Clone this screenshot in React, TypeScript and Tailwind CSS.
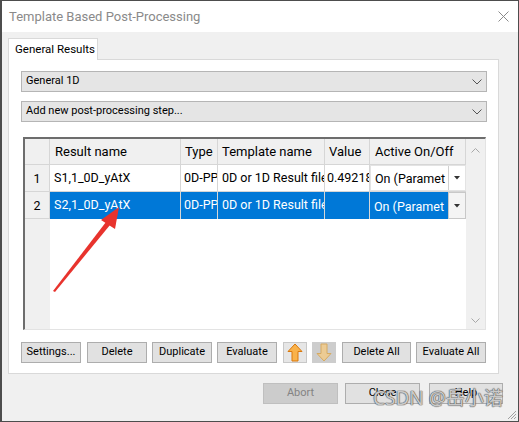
import React from "react";

const Chevron = () => (
  <svg width="10" height="6" viewBox="0 0 10 6" className="shrink-0">
    <path d="M0.5 0.5 L5 5 L9.5 0.5" fill="none" stroke="#555" strokeWidth="1" />
  </svg>
);

const Btn = ({ children, className = "" }: { children?: React.ReactNode; className?: string }) => (
  <div
    className={
      "h-[21px] flex items-center justify-center bg-[#e1e1e1] border border-[#adadad] text-[11px] text-black shrink-0 whitespace-nowrap " +
      className
    }
  >
    {children}
  </div>
);

const Drop = ({ label }: { label: string }) => (
  <div className="h-[21px] flex items-center justify-between bg-[#e5e5e5] border border-[#b5b5b5] pl-[4px] pr-[4px] text-[11px] text-black">
    <span>{label}</span>
    <Chevron />
  </div>
);

const ArrowUp = ({ fill, stroke }: { fill: string; stroke: string }) => (
  <svg width="16" height="19" viewBox="0 0 16 19">
    <polygon points="8,1 15,8.5 11,8.5 11,18 5,18 5,8.5 1,8.5" fill={fill} stroke={stroke} strokeWidth="1" strokeLinejoin="round" />
  </svg>
);

const ArrowDown = ({ fill, stroke }: { fill: string; stroke: string }) => (
  <svg width="16" height="19" viewBox="0 0 16 19">
    <polygon points="8,18 15,10.5 11,10.5 11,1 5,1 5,10.5 1,10.5" fill={fill} stroke={stroke} strokeWidth="1" strokeLinejoin="round" />
  </svg>
);

const SmallTri = ({ color }: { color: string }) => (
  <svg width="6" height="4" viewBox="0 0 6 4">
    <polygon points="0,0 6,0 3,3.5" fill={color} />
  </svg>
);

export default function App() {
  return (
    <div
      className="relative w-[519px] h-[422px] overflow-hidden bg-[#f0f0f0] border border-[#4d4d4d] border-l-2 flex flex-col"
      style={{ fontFamily: "Roboto, 'Noto Sans', sans-serif" }}
    >
      {/* title bar */}
      <div className="h-[31px] shrink-0 bg-white flex items-center justify-between pl-[7px] pr-[9px]">
        <span className="text-[13px] text-[#8a8a8a]">Template Based Post-Processing</span>
        <svg width="11" height="11" viewBox="0 0 11 11">
          <path d="M0.5 0.5 L10.5 10.5 M10.5 0.5 L0.5 10.5" stroke="#8a8a8a" strokeWidth="1" />
        </svg>
      </div>

      <div className="flex-1 flex flex-col pl-[6px]">
        {/* tab */}
        <div className="mt-[6px] flex">
          <div className="relative z-10 h-[22px] w-[90px] bg-white border border-[#d9d9d9] border-b-0 flex items-center pl-[6px] text-[11.5px] text-black whitespace-nowrap">
            General Results
          </div>
        </div>
        {/* panel */}
        <div className="-mt-[1px] w-[491px] h-[315px] bg-white border border-[#d9d9d9] pt-[11px] pl-[12px] pr-[11px] flex flex-col">
          <Drop label="General 1D" />
          <div className="h-[9px]" />
          <Drop label="Add new post-processing step..." />

          {/* grid */}
          <div className="mt-[15px] ml-[2px] mr-[1px] h-[193px] border-t-2 border-l-2 border-[#6d6d6d] border-r border-b border-r-[#e3e3e3] border-b-[#e3e3e3] flex text-[12.5px]">
            <div className="flex-1 flex flex-col">
              {/* header */}
              <div className="h-[26px] flex bg-[#f0f0f0] border-b border-[#d6d6d6] text-[13px]">
                <div className="w-[25px] border-r border-[#d6d6d6]" />
                <div className="w-[131px] border-r border-[#d6d6d6] pl-[5px] flex items-center">Result name</div>
                <div className="w-[37px] border-r border-[#d6d6d6] pl-[4px] flex items-center">Type</div>
                <div className="w-[107px] border-r border-[#d6d6d6] pl-[4px] flex items-center">Template name</div>
                <div className="w-[45px] border-r border-[#d6d6d6] pl-[4px] flex items-center">Value</div>
                <div className="w-[96px] border-r border-[#d6d6d6] pl-[5px] flex items-center">Active On/Off</div>
              </div>
              {/* row 1 */}
              <div className="h-[27px] flex border-b border-[#d6d6d6]">
                <div className="w-[25px] bg-[#f0f0f0] border-r border-[#d6d6d6] flex items-center justify-center pt-[2px]">1</div>
                <div className="w-[131px] border-r border-[#d6d6d6] pl-[4px] flex items-center whitespace-nowrap overflow-hidden">S1,1_0D_yAtX</div>
                <div className="w-[37px] border-r border-[#d6d6d6] pl-[3px] flex items-center whitespace-nowrap overflow-hidden">0D-PP</div>
                <div className="w-[107px] border-r border-[#d6d6d6] pl-[4px] flex items-center whitespace-nowrap overflow-hidden">0D or 1D Result file</div>
                <div className="w-[45px] border-r border-[#d6d6d6] pl-[2px] flex items-center whitespace-nowrap overflow-hidden">0.49218</div>
                <div className="w-[96px] flex border border-[#e3e3e3]">
                  <div className="flex-1 pl-[4px] pt-[3px] flex items-center whitespace-nowrap overflow-hidden">On (Paramet</div>
                  <div className="w-[17px] border-l border-[#d0d0d0] bg-white flex items-center justify-center">
                    <SmallTri color="#333" />
                  </div>
                </div>
              </div>
              {/* row 2 */}
              <div className="h-[27px] flex">
                <div className="w-[25px] bg-[#f0f0f0] border-r border-b border-[#d6d6d6] flex items-center justify-center pt-[2px]">2</div>
                <div className="w-[131px] bg-[#0078d7] text-white border-r border-[#d6d6d6] pl-[4px] flex items-center whitespace-nowrap overflow-hidden">S2,1_0D_yAtX</div>
                <div className="w-[37px] bg-[#0078d7] text-white border-r border-[#d6d6d6] pl-[3px] flex items-center whitespace-nowrap overflow-hidden">0D-PP</div>
                <div className="w-[107px] bg-[#0078d7] text-white border-r border-[#d6d6d6] pl-[4px] flex items-center whitespace-nowrap overflow-hidden">0D or 1D Result file</div>
                <div className="w-[45px] bg-[#0078d7] border-r border-[#d6d6d6]" />
                <div className="w-[96px] flex">
                  <div className="flex-1 bg-[#0078d7] text-white pl-[4px] pt-[3px] flex items-center whitespace-nowrap overflow-hidden">On (Paramet</div>
                  <div className="w-[18px] border border-[#c8c8c8] bg-[#f4f4f4] flex items-center justify-center">
                    <SmallTri color="#333" />
                  </div>
                </div>
              </div>
              {/* filler */}
              <div className="flex-1 flex">
                <div className="w-[25px] bg-[#f0f0f0]" />
                <div className="flex-1 bg-white" />
              </div>
            </div>
            {/* scrollbar */}
            <div className="w-[19px] bg-[#f0f0f0] flex flex-col items-center justify-between pt-[9px] pb-[6px]">
              <svg width="9" height="5" viewBox="0 0 9 5">
                <path d="M0.5 4.5 L4.5 0.5 L8.5 4.5" fill="none" stroke="#a8a8a8" strokeWidth="1" />
              </svg>
              <svg width="9" height="5" viewBox="0 0 9 5">
                <path d="M0.5 0.5 L4.5 4.5 L8.5 0.5" fill="none" stroke="#a8a8a8" strokeWidth="1" />
              </svg>
            </div>
          </div>

          {/* buttons row */}
          <div className="mt-[12px] flex">
            <Btn className="w-[60px]">Settings...</Btn>
            <Btn className="w-[60px] ml-[6px]">Delete</Btn>
            <Btn className="w-[60px] ml-[5px] bg-[#dfe0da]">Duplicate</Btn>
            <Btn className="w-[60px] ml-[5px]">Evaluate</Btn>
            <Btn className="w-[24px] ml-[6px] bg-[#e6e6e6] border-[#c8c8c8]">
              <ArrowUp fill="#f9b24a" stroke="#d9780c" />
            </Btn>
            <div className="h-[21px] w-[24px] ml-[5px] bg-[#cdcdcd] flex items-center justify-center">
              <ArrowDown fill="#eccb94" stroke="#d6aa62" />
            </div>
            <Btn className="w-[69px] ml-[6px]">Delete All</Btn>
            <Btn className="w-[70px] ml-[5px]">Evaluate All</Btn>
          </div>
        </div>

        {/* bottom buttons */}
        <div className="mt-[9px] flex pl-[255px]">
          <div className="h-[21px] w-[75px] bg-[#cccccc] border border-[#bfbfbf] flex items-center justify-center text-[11px] text-[#838383]">
            Abort
          </div>
          <Btn className="w-[75px] ml-[7px]">Close</Btn>
          <Btn className="w-[74px] ml-[9px] border-[#4a90d9]">Help</Btn>
        </div>
      </div>

      {/* resize grip */}
      <svg className="absolute right-[1px] bottom-[1px]" width="12" height="12" viewBox="0 0 12 12">
        <path d="M11 3 L3 11 M11 6 L6 11 M11 9 L9 11" stroke="#a0a0a0" strokeWidth="1" />
      </svg>

      {/* red annotation arrow */}
      <svg className="absolute left-0 top-0 pointer-events-none" width="519" height="422" viewBox="0 0 519 422">
        <polygon points="51,290 53,291 108,224 104,221" fill="#e8332d" />
        <polygon points="117,206 99,219 113,228" fill="#e8332d" />
      </svg>

      {/* watermark */}
      <div
        className="absolute left-[371px] top-[388px] text-[19px] leading-none text-[rgba(255,255,255,0.7)] [text-shadow:0_0_1px_#555,0_0_1px_#555,0_0_1px_#555] whitespace-nowrap"
        style={{ fontFamily: "'Noto Sans', 'Noto Sans CJK SC', sans-serif" }}
      >
        CSDN @岳小诺
      </div>
    </div>
  );
}
